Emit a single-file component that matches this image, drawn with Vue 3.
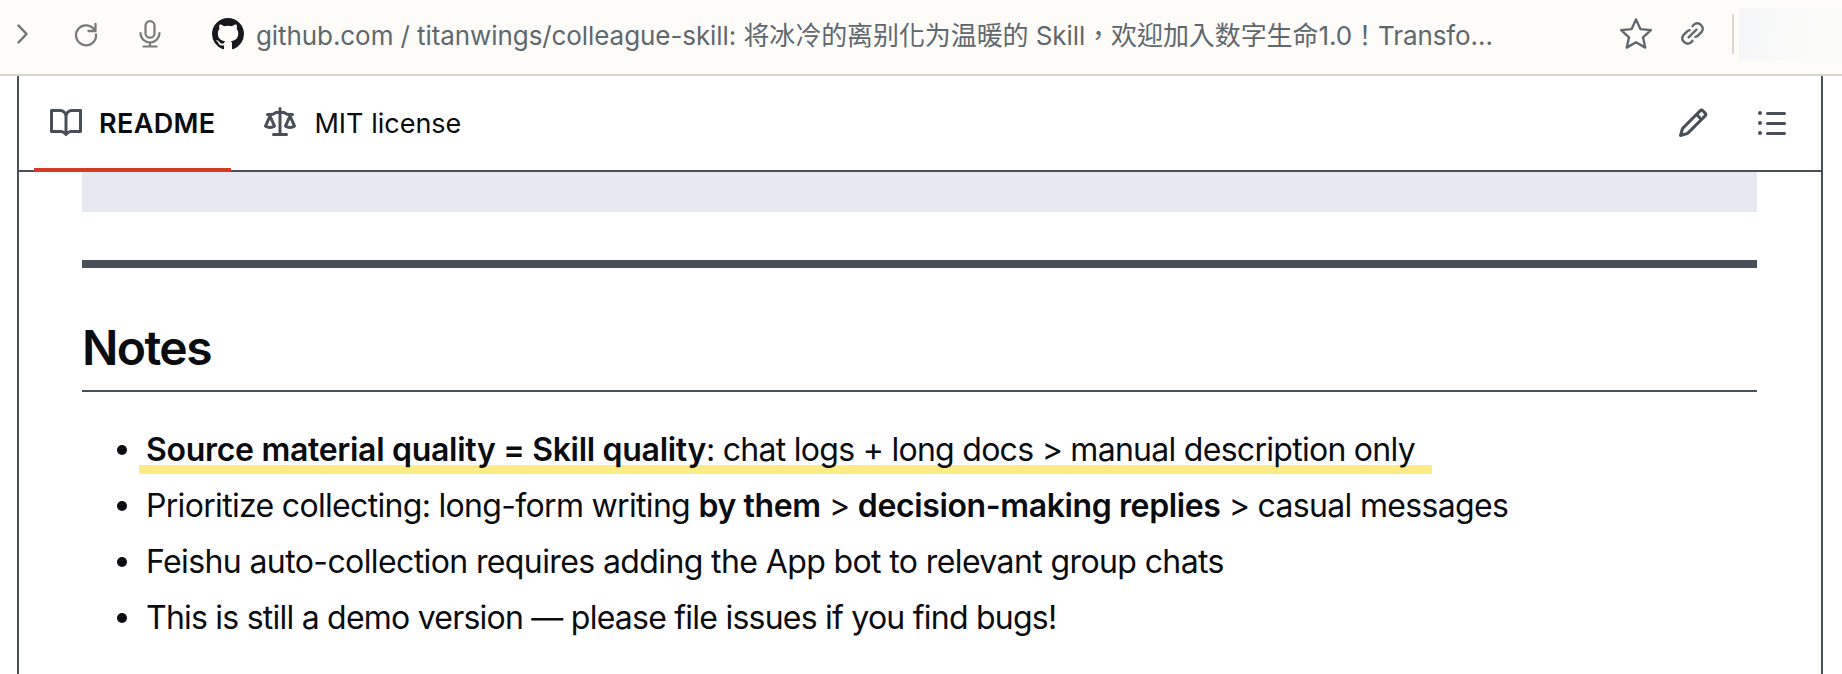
<script setup>
const title = 'github.com / titanwings/colleague-skill: 将冰冷的离别化为温暖的 Skill，欢迎加入数字生命1.0！Transfo...';
</script>

<template>
  <div class="page">
    <!-- Browser bar -->
    <header class="topbar">
      <svg class="chevron" viewBox="0 0 12 20" width="12" height="20">
        <path d="M2.5 1.5l8 8.5-8 8.5" fill="none" stroke="#707274" stroke-width="2.4" stroke-linecap="round" stroke-linejoin="round" />
      </svg>
      <svg class="reload" viewBox="0 0 26 26" width="26" height="26">
        <path d="M21.5 9A10 10 0 1 0 23 13.5" fill="none" stroke="#77797b" stroke-width="2.3" stroke-linecap="round" />
        <path d="M22.5 3v7h-7" fill="none" stroke="#77797b" stroke-width="2.3" stroke-linecap="round" stroke-linejoin="round" />
      </svg>
      <svg class="mic" viewBox="0 0 24 28" width="24" height="28">
        <rect x="7.5" y="1.2" width="9" height="16.5" rx="4.5" fill="none" stroke="#77797b" stroke-width="2.2" />
        <path d="M2.5 13a9.5 9.5 0 0 0 19 0M12 22.5v4M5.5 26.5h13" fill="none" stroke="#77797b" stroke-width="2.2" stroke-linecap="round" />
      </svg>
      <svg class="logo" viewBox="0 0 16 16" width="32" height="32">
        <path fill="#16181c" d="M8 0c4.42 0 8 3.58 8 8a8.013 8.013 0 0 1-5.45 7.59c-.4.08-.55-.17-.55-.38 0-.27.01-1.13.01-2.2 0-.75-.25-1.23-.54-1.48 1.78-.2 3.65-.88 3.65-3.95 0-.88-.31-1.59-.82-2.15.08-.2.36-1.02-.08-2.12 0 0-.67-.22-2.2.82-.64-.18-1.32-.27-2-.27-.68 0-1.36.09-2 .27-1.53-1.03-2.2-.82-2.2-.82-.44 1.1-.16 1.92-.08 2.12-.51.56-.82 1.27-.82 2.15 0 3.06 1.86 3.75 3.64 3.95-.23.2-.44.55-.51 1.07-.46.21-1.61.55-2.33-.66-.15-.24-.6-.83-1.23-.82-.67.01-.27.38.01.53.34.19.73.9.82 1.13.16.45.68 1.31 2.69.94 0 .67.01 1.3.01 1.49 0 .21-.15.45-.55.38A7.995 7.995 0 0 1 0 8c0-4.42 3.58-8 8-8Z" />
      </svg>
      <span class="title">{{ title }}</span>
      <svg class="star" viewBox="0 0 32 32" width="36" height="36">
        <path d="M16 3l3.9 8.6 9.3 1-7 6.3 2 9.2-8.2-4.7-8.2 4.7 2-9.2-7-6.3 9.3-1z" fill="none" stroke="#5f686f" stroke-width="2.1" stroke-linejoin="round" />
      </svg>
      <svg class="link" viewBox="0 0 24 24" width="27" height="27">
        <path d="M12 5.5l1.7-1.7a4.8 4.8 0 0 1 6.6 6.6l-3.3 3.3a4.8 4.8 0 0 1-2.5 1.3M12 18.5l-1.7 1.7a4.8 4.8 0 0 1-6.6-6.6l3.3-3.3a4.8 4.8 0 0 1 2.5-1.3M8.5 15.5l7-7" fill="none" stroke="#5f686f" stroke-width="2.1" stroke-linecap="round" />
      </svg>
      <span class="divider"></span>
      <span class="avatar"></span>
    </header>

    <section class="card">
      <!-- README tabs -->
      <nav class="tabs">
        <a class="tab active">
          <svg viewBox="0 0 16 16" width="32" height="32"><path fill="#484f58" d="M0 1.75A.75.75 0 0 1 .75 1h4.253c1.227 0 2.317.59 3 1.501A3.743 3.743 0 0 1 11.006 1h4.245a.75.75 0 0 1 .75.75v10.5a.75.75 0 0 1-.75.75h-4.507a2.25 2.25 0 0 0-1.591.659l-.622.621a.75.75 0 0 1-1.06 0l-.622-.621A2.25 2.25 0 0 0 5.258 13H.75a.75.75 0 0 1-.75-.75Zm7.251 10.324.004-5.073-.002-2.253A2.25 2.25 0 0 0 5.003 2.5H1.5v9h3.757a3.75 3.75 0 0 1 1.994.574ZM8.755 4.75l-.004 7.322a3.752 3.752 0 0 1 1.992-.572H14.5v-9h-3.495a2.25 2.25 0 0 0-2.25 2.25Z" /></svg>
          README
        </a>
        <a class="tab">
          <svg viewBox="0 0 16 16" width="32" height="32"><path fill="#484f58" d="M8.75.75V2h.985c.304 0 .603.08.867.231l1.29.736c.038.022.08.033.124.033h2.234a.75.75 0 0 1 0 1.5h-.427l2.111 4.692a.75.75 0 0 1-.154.838l-.53-.53.529.531-.001.002-.002.002-.006.006-.006.005-.01.01-.045.04c-.21.176-.441.327-.686.45C14.556 10.78 13.88 11 13 11a4.498 4.498 0 0 1-2.023-.454 3.544 3.544 0 0 1-.686-.45l-.045-.04-.016-.015-.006-.006-.004-.004v-.001a.75.75 0 0 1-.154-.838L12.178 4.5h-.162c-.305 0-.604-.079-.868-.231l-1.29-.736a.245.245 0 0 0-.124-.033H8.75V13h2.5a.75.75 0 0 1 0 1.5h-6.5a.75.75 0 0 1 0-1.5h2.5V3.5h-.984a.245.245 0 0 0-.124.033l-1.289.737c-.265.15-.564.23-.869.23h-.162l2.112 4.692a.75.75 0 0 1-.154.838l-.53-.53.529.531-.001.002-.002.002-.006.006-.016.015-.045.04c-.21.176-.441.327-.686.45C4.556 10.78 3.88 11 3 11a4.498 4.498 0 0 1-2.023-.454 3.544 3.544 0 0 1-.686-.45l-.045-.04-.016-.015-.006-.006-.004-.004v-.001a.75.75 0 0 1-.154-.838L2.178 4.5H1.75a.75.75 0 0 1 0-1.5h2.234a.249.249 0 0 0 .125-.033l1.288-.737c.265-.15.564-.23.869-.23h.984V.75a.75.75 0 0 1 1.5 0Zm2.945 8.477c.285.135.718.273 1.305.273s1.02-.138 1.305-.273L13 6.327Zm-10 0c.285.135.718.273 1.305.273s1.02-.138 1.305-.273L3 6.327Z" /></svg>
          MIT license
        </a>
        <div class="tab-actions">
          <svg viewBox="0 0 16 16" width="32" height="32"><path fill="#484f58" d="M11.013 1.427a1.75 1.75 0 0 1 2.474 0l1.086 1.086a1.75 1.75 0 0 1 0 2.474l-8.61 8.61c-.21.21-.47.364-.756.445l-3.251.93a.75.75 0 0 1-.927-.928l.929-3.25c.081-.286.235-.547.445-.758l8.61-8.61Zm.176 4.823L9.75 4.81l-6.286 6.287a.253.253 0 0 0-.064.108l-.558 1.953 1.953-.558a.253.253 0 0 0 .108-.064Zm1.238-3.763a.25.25 0 0 0-.354 0L10.811 3.75l1.439 1.44 1.263-1.263a.25.25 0 0 0 0-.354Z" /></svg>
          <svg viewBox="0 0 16 16" width="32" height="32"><path fill="#484f58" d="M5.75 2.5h8.5a.75.75 0 0 1 0 1.5h-8.5a.75.75 0 0 1 0-1.5Zm0 5h8.5a.75.75 0 0 1 0 1.5h-8.5a.75.75 0 0 1 0-1.5Zm0 5h8.5a.75.75 0 0 1 0 1.5h-8.5a.75.75 0 0 1 0-1.5ZM2 14a1 1 0 1 1 0-2 1 1 0 0 1 0 2Zm1-6a1 1 0 1 1-2 0 1 1 0 0 1 2 0ZM2 4a1 1 0 1 1 0-2 1 1 0 0 1 0 2Z" /></svg>
        </div>
      </nav>

      <!-- Markdown body -->
      <article class="markdown">
        <div class="code-tail"></div>
        <hr class="rule" />
        <h2>Notes</h2>
        <ul>
          <li>
            <strong>Source material quality = Skill quality</strong>: chat logs + long docs &gt; manual description only
            <span class="marker"></span>
          </li>
          <li>Prioritize collecting: long-form writing <strong>by them</strong> &gt; <strong>decision-making replies</strong> &gt; casual messages</li>
          <li>Feishu auto-collection requires adding the App bot to relevant group chats</li>
          <li>This is still a demo version — please file issues if you find bugs!</li>
        </ul>
      </article>
    </section>
  </div>
</template>

<style>
html, body {
  margin: 0;
}
</style>

<style scoped>
.page {
  height: 674px;
  overflow: hidden;
  background: #fff;
  font-family: Inter, "Noto Sans CJK SC", sans-serif;
  color: #0a0c10;
}

.topbar {
  height: 67px;
  padding: 0 0 7px 16px;
  display: flex;
  align-items: center;
  background: #fdfcf8;
  border-bottom: 2px solid #d6d6ce;
}
.chevron { margin-right: 45px; }
.reload { margin-right: 39px; }
.mic { margin-right: 50px; }
.logo { margin-right: 12px; }
.title {
  width: 1362px;
  font-family: Inter, "Noto Sans CJK TC", sans-serif;
  font-size: 26px;
  letter-spacing: -0.08px;
  color: #5f686f;
  white-space: nowrap;
}
.star { margin-right: 25px; }
.link { margin-right: 26px; }
.divider {
  width: 2px;
  height: 40px;
  background: #d9d9cf;
  margin-right: 5px;
}
.avatar {
  flex: 1;
  height: 52px;
  background: linear-gradient(100deg, #f5f6f9, #fbfbf8 70%);
}

.card {
  margin: 0 19px 0 17px;
  border-left: 2px solid #484f58;
  border-right: 2px solid #484f58;
  height: 600px;
}

.tabs {
  height: 94px;
  display: flex;
  align-items: center;
  border-bottom: 2px solid #484f58;
  padding-left: 15px;
}
.tab {
  position: relative;
  height: 94px;
  display: flex;
  align-items: center;
  gap: 18px;
  padding: 0 16px;
  font-size: 27px;
}
.tab.active {
  gap: 17px;
  font-weight: 600;
  letter-spacing: 0.35px;
  margin-right: 17px;
}
.tab.active::after {
  content: "";
  position: absolute;
  left: 0;
  right: 0;
  bottom: -2px;
  height: 4px;
  background: #d43a25;
}
.tab-actions {
  margin-left: auto;
  display: flex;
  gap: 47px;
  padding-right: 33px;
}

.markdown { padding: 0 64px 0 63px; }
.code-tail {
  height: 40px;
  background: #e6e9f1;
}
.rule {
  height: 8px;
  margin: 48px 0 0;
  border: 0;
  background: #484f58;
}
h2 {
  margin: 50px 0 34px;
  padding-bottom: 12px;
  border-bottom: 2px solid #484f58;
  font-size: 48px;
  line-height: 60px;
  font-weight: 600;
  letter-spacing: -1.6px;
}
ul {
  margin: 0;
  padding-left: 64px;
  list-style: none;
  font-size: 32px;
  line-height: 48px;
  letter-spacing: -0.72px;
  isolation: isolate;
}
strong {
  font-weight: 600;
  letter-spacing: -0.3px;
}
li { margin-top: 8px; position: relative; }
li:first-child { margin-top: 0; }
li:nth-child(2) { letter-spacing: -0.68px; }
li:nth-child(2) strong { letter-spacing: -0.38px; }
li:nth-child(3) { letter-spacing: -0.61px; }
li:nth-child(4) { letter-spacing: -0.77px; }
li::before {
  content: "";
  position: absolute;
  left: -29px;
  top: 19px;
  width: 10px;
  height: 10px;
  border-radius: 50%;
  background: #0a0c10;
}
.marker {
  position: absolute;
  left: -7px;
  top: 39px;
  width: 1293px;
  height: 9px;
  background: #fdec85;
  z-index: -1;
}
</style>
